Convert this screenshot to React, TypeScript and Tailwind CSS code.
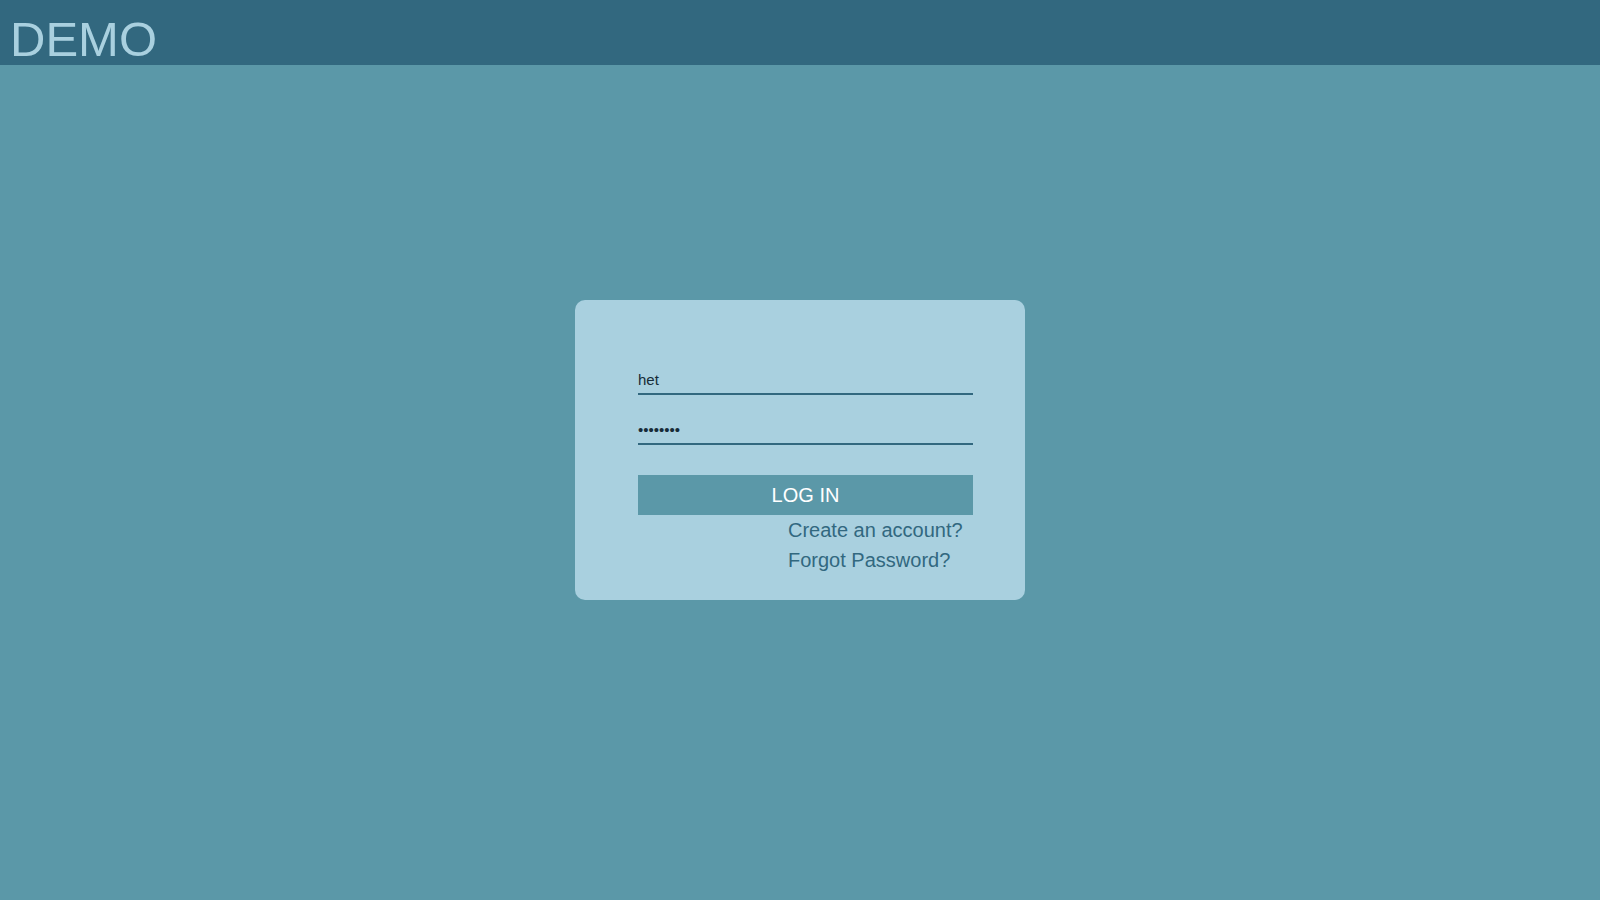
import { useState } from 'react';

export default function App() {
  const [username, setUsername] = useState('het');
  const [password, setPassword] = useState('password');

  return (
    <div className="min-h-screen bg-[#5b98a8] font-['Liberation_Sans',Arial,sans-serif]">
      {/* --- HEADER --- */}
      <header className="h-[65px] bg-[#32687f] px-[10px]">
        <h1 className="pt-[15px] text-[49px] leading-none font-normal text-[#a9d0df]">DEMO</h1>
      </header>

      <main className="flex justify-center pt-[235px]">
        {/* --- LOGIN CARD --- */}
        <div className="w-[450px] rounded-[10px] bg-[#a9d0df] pt-[67px] pb-[25px] pl-[63px] pr-[52px]">
          <form onSubmit={e => e.preventDefault()} className="flex flex-col">
            <input
              type="text"
              value={username}
              onChange={e => setUsername(e.target.value)}
              className="h-[28px] w-full border-b-2 border-[#32687f] bg-transparent p-0 pb-[2px] text-[15px] leading-normal text-[#172c38] outline-none"
            />
            <input
              type="password"
              value={password}
              onChange={e => setPassword(e.target.value)}
              className="mt-[22px] h-[28px] w-full border-b-2 border-[#32687f] bg-transparent p-0 pb-[2px] text-[15px] leading-normal text-[#172c38] outline-none"
            />
            <button
              type="submit"
              className="mt-[30px] h-[40px] w-full bg-[#5b98a8] text-[20px] text-white"
            >
              LOG IN
            </button>
            <div className="pl-[150px] text-[20px] leading-[30px] text-[#32687f]">
              <a href="#" className="block">Create an account?</a>
              <a href="#" className="block">Forgot Password?</a>
            </div>
          </form>
        </div>
      </main>
    </div>
  );
}
